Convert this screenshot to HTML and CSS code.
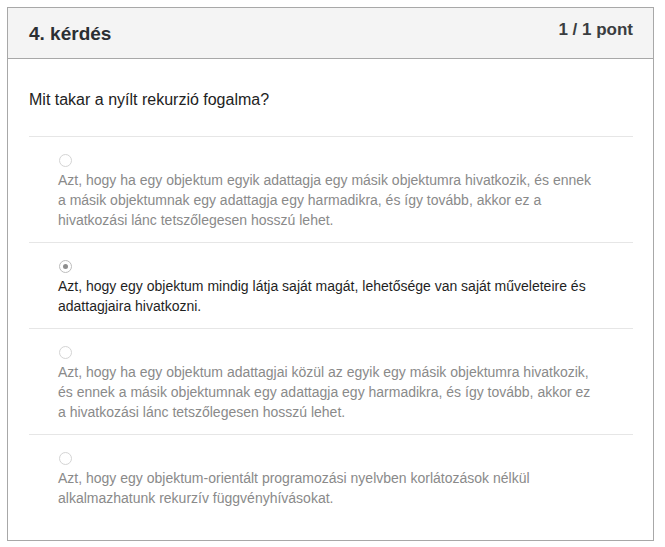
FILE: index.html
```html
<!DOCTYPE html>
<html lang="hu">
<head>
<meta charset="utf-8">
<title>4. kérdés</title>
<link rel="stylesheet" href="styles.css">
</head>
<body>
<div class="card">
  <div class="card-header">
    <h2 class="title">4. kérdés</h2>
    <span class="points">1 / 1 pont</span>
  </div>
  <div class="card-body">
    <p class="question">Mit takar a nyílt rekurzió fogalma?</p>
    <ul class="options">
      <li class="option">
        <span class="radio"></span>
        <div class="option-text">Azt, hogy ha egy objektum egyik adattagja egy másik objektumra hivatkozik, és ennek a másik objektumnak egy adattagja egy harmadikra, és így tovább, akkor ez a hivatkozási lánc tetszőlegesen hosszú lehet.</div>
      </li>
      <li class="option selected">
        <span class="radio"></span>
        <div class="option-text">Azt, hogy egy objektum mindig látja saját magát, lehetősége van saját műveleteire és adattagjaira hivatkozni.</div>
      </li>
      <li class="option">
        <span class="radio"></span>
        <div class="option-text">Azt, hogy ha egy objektum adattagjai közül az egyik egy másik objektumra hivatkozik, és ennek a másik objektumnak egy adattagja egy harmadikra, és így tovább, akkor ez a hivatkozási lánc tetszőlegesen hosszú lehet.</div>
      </li>
      <li class="option">
        <span class="radio"></span>
        <div class="option-text">Azt, hogy egy objektum-orientált programozási nyelvben korlátozások nélkül alkalmazhatunk rekurzív függvényhívásokat.</div>
      </li>
    </ul>
  </div>
</div>
</body>
</html>
```
FILE: styles.css
```css
* { box-sizing: border-box; }
body {
  margin: 7px;
  font-family: "Liberation Sans", Arial, sans-serif;
  background: #fff;
  color: #222;
}
.card {
  width: 647px;
  border: 1px solid #a8a8a8;
  background: #fff;
}
.card-header {
  display: flex;
  justify-content: space-between;
  align-items: flex-start;
  height: 51px;
  padding: 0 20px 0 21px;
  background: #f4f4f4;
  border-bottom: 1px solid #a8a8a8;
}
.title {
  margin: 15px 0 0;
  font-size: 19px;
  line-height: 22px;
  font-weight: bold;
  color: #2b2f33;
}
.points {
  margin-top: 12px;
  font-size: 17px;
  line-height: 20px;
  font-weight: bold;
  color: #3a3d40;
}
.card-body {
  padding: 0 20px 20px 21px;
}
.question {
  margin: 31px 0 26px;
  font-size: 16px;
  line-height: 20px;
  color: #222;
}
.options {
  list-style: none;
  margin: 0;
  padding: 0;
}
.option {
  border-top: 1px solid #e6e6e6;
  padding: 17px 34px 12px 29px;
  color: #8a8a8a;
}
.radio {
  display: block;
  width: 13px;
  height: 13px;
  border: 1px solid #d4d4d4;
  border-radius: 50%;
  background: #fff;
  margin-left: 1px;
  margin-bottom: 3px;
  position: relative;
}
.option.selected .radio {
  border-color: #bdbdbd;
}
.option.selected .radio::after {
  content: "";
  position: absolute;
  left: 3px;
  top: 3px;
  width: 5px;
  height: 5px;
  border-radius: 50%;
  background: #8e8e8e;
}
.option-text {
  font-size: 14px;
  line-height: 20px;
}
.option.selected .option-text {
  color: #1f1f1f;
}
```
